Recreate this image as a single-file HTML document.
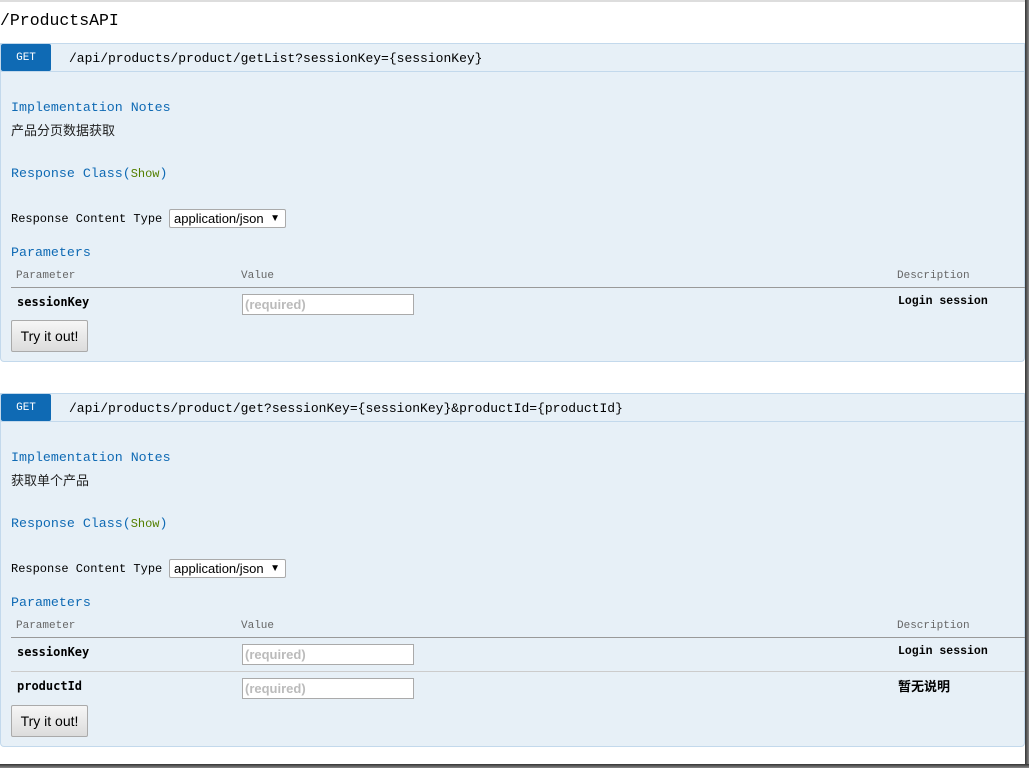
<!DOCTYPE html>
<html><head><meta charset="utf-8"><style>
*{margin:0;padding:0;box-sizing:border-box}
body{width:1029px;height:768px;background:#fff;position:relative;overflow:hidden;font-family:"Liberation Mono","Noto Sans CJK SC",monospace;color:#000}
.a{position:absolute;white-space:nowrap}
.blue{color:#0f6ab4}
.hdr{position:absolute;left:0;width:1025px;height:29px;background:#e7f0f7;border:1px solid #c3d9ec;border-bottom:1px solid #c3d9ec}
.get{position:absolute;left:1px;width:50px;height:27px;background:#0f6ab4;color:#fff;font-size:11px;text-align:center;line-height:29px;border-radius:2px}
.body{position:absolute;left:0;width:1025px;background:#e7f0f7;border:1px solid #c3d9ec;border-top:none;border-radius:0 0 4px 4px}
.cn{font-family:"Noto Sans CJK SC","WenQuanYi Zen Hei",sans-serif;font-size:13px;color:#222}
.sel{position:absolute;left:169px;width:117px;height:19px;background:#fff;border:1px solid #aaa;border-radius:2px;font:13px "Liberation Sans",sans-serif;line-height:17px;padding-left:4px;color:#000}
.sel span{position:absolute;right:5px;font-size:10px}
.th{font-size:11px;color:#666}
.line{position:absolute;left:11px;width:1014px;height:1px}
.pn{font:bold 12px "DejaVu Sans Mono",monospace;color:#000}
.inp{position:absolute;left:242px;width:172px;height:21px;background:#fff;border:1px solid #aaa;font:bold 13px "Liberation Sans",sans-serif;color:#bbb;line-height:19px;padding-left:2px}
.btn{position:absolute;left:11px;width:77px;height:32px;border:1px solid #aaa;border-radius:2px;background:linear-gradient(#f6f6f6,#dcdcdc);font:14px "Liberation Sans",sans-serif;text-align:center;line-height:30px;color:#000}
.desc{font:bold 11.5px "Liberation Mono","Noto Sans CJK SC",monospace}
</style></head><body>
<div class="a" style="left:0;top:0;width:1025px;height:2px;background:#ddd"></div>
<div class="a" style="left:0;top:11px;font-size:16.5px;font-family:'Liberation Mono',monospace">/ProductsAPI</div>

<!-- section 1 -->
<div class="hdr" style="top:43px"></div>
<div class="get" style="top:44px">GET</div>
<div class="a" style="left:69px;top:51px;font-size:13px">/api/products/product/getList?sessionKey={sessionKey}</div>
<div class="body" style="top:72px;height:290px"></div>
<div class="a blue" style="left:11px;top:100px;font-size:13.3px">Implementation Notes</div>
<div class="a cn" style="left:11px;top:120px">产品分页数据获取</div>
<div class="a blue" style="left:11px;top:166px;font-size:13.3px">Response Class(<span style="color:#547f00;font-size:12px">Show</span>)</div>
<div class="a" style="left:11px;top:212px;font-size:12px">Response Content Type</div>
<div class="sel" style="top:209px">application/json<span>▼</span></div>
<div class="a blue" style="left:11px;top:245px;font-size:13.3px">Parameters</div>
<div class="a th" style="left:16px;top:270px">Parameter</div>
<div class="a th" style="left:241px;top:270px">Value</div>
<div class="a th" style="left:897px;top:270px">Description</div>
<div class="line" style="top:287px;background:#999"></div>
<div class="a pn" style="left:17px;top:295px">sessionKey</div>
<div class="inp" style="top:294px">(required)</div>
<div class="a desc" style="left:898px;top:295px">Login session</div>
<div class="btn" style="top:320px">Try it out!</div>

<!-- section 2 -->
<div class="hdr" style="top:393px"></div>
<div class="get" style="top:394px">GET</div>
<div class="a" style="left:69px;top:401px;font-size:13px">/api/products/product/get?sessionKey={sessionKey}&amp;productId={productId}</div>
<div class="body" style="top:422px;height:325px"></div>
<div class="a blue" style="left:11px;top:450px;font-size:13.3px">Implementation Notes</div>
<div class="a cn" style="left:11px;top:470px">获取单个产品</div>
<div class="a blue" style="left:11px;top:516px;font-size:13.3px">Response Class(<span style="color:#547f00;font-size:12px">Show</span>)</div>
<div class="a" style="left:11px;top:562px;font-size:12px">Response Content Type</div>
<div class="sel" style="top:559px">application/json<span>▼</span></div>
<div class="a blue" style="left:11px;top:595px;font-size:13.3px">Parameters</div>
<div class="a th" style="left:16px;top:620px">Parameter</div>
<div class="a th" style="left:241px;top:620px">Value</div>
<div class="a th" style="left:897px;top:620px">Description</div>
<div class="line" style="top:637px;background:#999"></div>
<div class="a pn" style="left:17px;top:645px">sessionKey</div>
<div class="inp" style="top:644px">(required)</div>
<div class="a desc" style="left:898px;top:645px">Login session</div>
<div class="line" style="top:671px;background:#ccc"></div>
<div class="a pn" style="left:17px;top:679px">productId</div>
<div class="inp" style="top:678px">(required)</div>
<div class="a desc" style="left:898px;top:676px;font-size:13px">暂无说明</div>
<div class="btn" style="top:705px">Try it out!</div>

<!-- frame shadow -->
<div class="a" style="left:1025px;top:0;width:4px;height:768px;background:linear-gradient(90deg,#333,#888)"></div>
<div class="a" style="left:0;top:764px;width:1029px;height:4px;background:linear-gradient(#333,#888)"></div>
</body></html>
